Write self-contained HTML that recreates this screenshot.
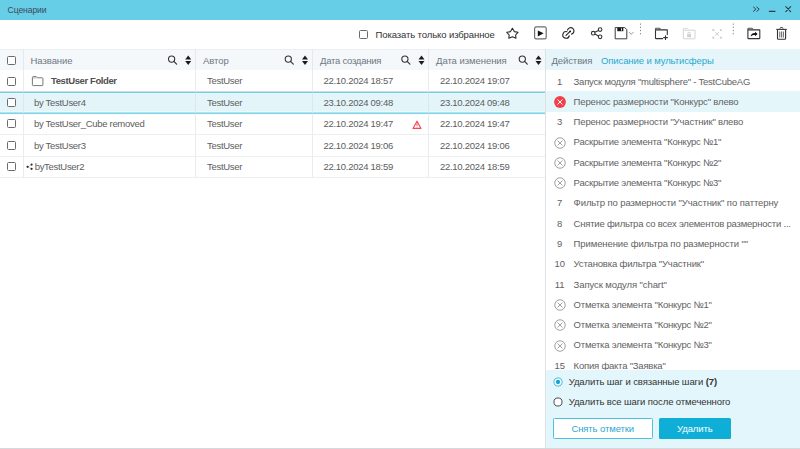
<!DOCTYPE html>
<html><head><meta charset="utf-8">
<style>
*{box-sizing:border-box;margin:0;padding:0}
html,body{width:800px;height:449px;overflow:hidden;background:#fff;font-family:"Liberation Sans",sans-serif;}
.a{position:absolute;white-space:nowrap}
#title{position:absolute;left:0;top:0;width:800px;height:19.5px;background:#67cee7;}
#title .t{left:7.6px;top:5px;font-size:8.6px;color:#3b4a58;line-height:11px;letter-spacing:-0.1px}
.tb{position:absolute;left:0;top:19.5px;width:800px;height:29px;background:#fff}
.cb{position:absolute;width:9px;height:9px;border:1.3px solid #6b6b6b;border-radius:1.5px;background:#fff}
.txt{font-size:9.5px;color:#5d5d5d;line-height:12px;letter-spacing:-0.1px}
.hdr{position:absolute;left:0;top:48.5px;width:546px;height:21.5px;background:#f5f8fb;border-top:1px solid #eceff2}
.vl{position:absolute;width:1px;background:rgba(215,220,226,0.55)}
.hl{position:absolute;height:1px;background:#eceef0}
.htxt{font-size:9.5px;color:#6d7781;line-height:12px;letter-spacing:-0.05px}
.row{position:absolute;left:0;width:546px;height:21.5px}
.sel{background:#e4f5fa}
.ptxt{font-size:9.5px;color:#626262;line-height:12px;letter-spacing:-0.1px}
</style></head><body>
<div id="title">
  <div class="a t">Сценарии</div>
</div>
<div class="tb"></div>
<div class="cb" style="left:359px;top:29.8px"></div>
<div class="a txt" style="left:375.5px;top:29px;color:#333">Показать только избранное</div>

<div class="hdr"></div>
<div class="cb" style="left:7px;top:55.5px"></div>
<div class="a htxt" style="left:30.5px;top:55px">Название</div>
<div class="a htxt" style="left:203px;top:55px">Автор</div>
<div class="a htxt" style="left:320px;top:55px;letter-spacing:-0.25px">Дата создания</div>
<div class="a htxt" style="left:436px;top:55px">Дата изменения</div>


<div class="row sel" style="top:91px;height:23px"></div>
<div class="a" style="left:0;top:91px;width:546px;height:1px;background:#c9e0e8"></div>
<div class="a" style="left:0;top:92px;width:546px;height:1px;background:#6ccfe6"></div>
<div class="a" style="left:0;top:93px;width:546px;height:1px;background:#f0f9fc"></div>
<div class="a" style="left:0;top:111px;width:546px;height:1px;background:#eef9fc"></div>
<div class="a" style="left:0;top:112px;width:546px;height:1px;background:#b0e3f0"></div>
<div class="a" style="left:0;top:113px;width:546px;height:1px;background:#7dd6ea"></div>
<div class="a" style="left:0;top:114px;width:546px;height:1px;background:#f5fbfd"></div>
<div class="vl" style="left:23px;top:49px;height:129px"></div>
<div class="vl" style="left:195px;top:49px;height:129px"></div>
<div class="vl" style="left:312px;top:49px;height:129px"></div>
<div class="vl" style="left:428px;top:49px;height:129px"></div>
<div class="hl" style="left:0;top:134px;width:546px"></div>
<div class="hl" style="left:0;top:156px;width:546px"></div>
<div class="hl" style="left:0;top:177px;width:546px"></div>

<div class="cb" style="left:7px;top:76.5px"></div>
<div class="cb" style="left:7px;top:97.5px"></div>
<div class="cb" style="left:7px;top:119px"></div>
<div class="cb" style="left:7px;top:140.5px"></div>
<div class="cb" style="left:7px;top:162px"></div>

<div class="a txt" style="left:51px;top:75px;font-weight:bold;color:#505050;letter-spacing:-0.4px">TestUser Folder</div>
<div class="a txt" style="left:34px;top:96.5px;letter-spacing:-0.3px">by TestUser4</div>
<div class="a txt" style="left:34px;top:118px;letter-spacing:-0.3px">by TestUser_Cube removed</div>
<div class="a txt" style="left:34px;top:139.5px;letter-spacing:-0.3px">by TestUser3</div>
<div class="a txt" style="left:34.7px;top:161px;letter-spacing:-0.3px">byTestUser2</div>

<div class="a txt" style="left:207px;top:75px;letter-spacing:-0.3px">TestUser</div>
<div class="a txt" style="left:207px;top:96.5px;letter-spacing:-0.3px">TestUser</div>
<div class="a txt" style="left:207px;top:118px;letter-spacing:-0.3px">TestUser</div>
<div class="a txt" style="left:207px;top:139.5px;letter-spacing:-0.3px">TestUser</div>
<div class="a txt" style="left:207px;top:161px;letter-spacing:-0.3px">TestUser</div>

<div class="a txt" style="left:323.5px;top:75px;letter-spacing:-0.28px">22.10.2024 18:57</div>
<div class="a txt" style="left:323.5px;top:96.5px;letter-spacing:-0.28px">23.10.2024 09:48</div>
<div class="a txt" style="left:323.5px;top:118px;letter-spacing:-0.28px">22.10.2024 19:47</div>
<div class="a txt" style="left:323.5px;top:139.5px;letter-spacing:-0.28px">22.10.2024 19:06</div>
<div class="a txt" style="left:323.5px;top:161px;letter-spacing:-0.28px">22.10.2024 18:59</div>

<div class="a txt" style="left:440px;top:75px;letter-spacing:-0.28px">22.10.2024 19:07</div>
<div class="a txt" style="left:440px;top:96.5px;letter-spacing:-0.28px">23.10.2024 09:48</div>
<div class="a txt" style="left:440px;top:118px;letter-spacing:-0.28px">22.10.2024 19:47</div>
<div class="a txt" style="left:440px;top:139.5px;letter-spacing:-0.28px">22.10.2024 19:06</div>
<div class="a txt" style="left:440px;top:161px;letter-spacing:-0.28px">22.10.2024 18:59</div>

<!-- right panel -->
<div class="a" style="left:545px;top:48.5px;width:255px;height:400.5px;background:#fff;border-left:1px solid #dfe2e5"></div>
<div class="a" style="left:546px;top:49px;width:254px;height:21px;background:#e6f5fa"></div>
<div class="a ptxt" style="left:551.5px;top:55px;color:#6d7780">Действия</div>
<div class="a ptxt" style="left:601px;top:55px;color:#26a9cf">Описание и мультисферы</div>

<div class="a" style="left:546px;top:91px;width:254px;height:21px;background:#e5f6fb"></div>

<div class="a ptxt" style="left:549.7px;width:20px;text-align:center;top:75.5px">1</div>
<div class="a ptxt" style="left:573.6px;top:75.5px;letter-spacing:-0.22px">Запуск модуля &quot;multisphere&quot; - TestCubeAG</div>
<svg class="a" style="left:553.7px;top:96.0px" width="12" height="12" viewBox="0 0 12 12"><circle cx="6" cy="6" r="5.9" fill="#f53f48"/><path d="M3.7 3.7L8.3 8.3M8.3 3.7L3.7 8.3" stroke="#fff" stroke-width="1" stroke-linecap="round"/></svg>
<div class="a ptxt" style="left:573.6px;top:95.8px;letter-spacing:-0.157px">Перенос размерности &quot;Конкурс&quot; влево</div>
<div class="a ptxt" style="left:549.7px;width:20px;text-align:center;top:116.1px">3</div>
<div class="a ptxt" style="left:573.6px;top:116.1px;letter-spacing:-0.164px">Перенос размерности &quot;Участник&quot; влево</div>
<svg class="a" style="left:553.7px;top:136.6px" width="12" height="12" viewBox="0 0 12 12"><circle cx="6" cy="6" r="5.25" fill="none" stroke="#909090" stroke-width="0.85"/><path d="M3.8 3.8L8.2 8.2M8.2 3.8L3.8 8.2" stroke="#909090" stroke-width="0.85" stroke-linecap="round"/></svg>
<div class="a ptxt" style="left:573.6px;top:136.4px;letter-spacing:-0.219px">Раскрытие элемента &quot;Конкурс №1&quot;</div>
<svg class="a" style="left:553.7px;top:156.9px" width="12" height="12" viewBox="0 0 12 12"><circle cx="6" cy="6" r="5.25" fill="none" stroke="#909090" stroke-width="0.85"/><path d="M3.8 3.8L8.2 8.2M8.2 3.8L3.8 8.2" stroke="#909090" stroke-width="0.85" stroke-linecap="round"/></svg>
<div class="a ptxt" style="left:573.6px;top:156.7px;letter-spacing:-0.219px">Раскрытие элемента &quot;Конкурс №2&quot;</div>
<svg class="a" style="left:553.7px;top:177.2px" width="12" height="12" viewBox="0 0 12 12"><circle cx="6" cy="6" r="5.25" fill="none" stroke="#909090" stroke-width="0.85"/><path d="M3.8 3.8L8.2 8.2M8.2 3.8L3.8 8.2" stroke="#909090" stroke-width="0.85" stroke-linecap="round"/></svg>
<div class="a ptxt" style="left:573.6px;top:177.0px;letter-spacing:-0.219px">Раскрытие элемента &quot;Конкурс №3&quot;</div>
<div class="a ptxt" style="left:549.7px;width:20px;text-align:center;top:197.3px">7</div>
<div class="a ptxt" style="left:573.6px;top:197.3px">Фильтр по размерности &quot;Участник&quot; по паттерну</div>
<div class="a ptxt" style="left:549.7px;width:20px;text-align:center;top:217.6px">8</div>
<div class="a ptxt" style="left:573.6px;top:217.6px;letter-spacing:-0.212px">Снятие фильтра со всех элементов размерности ...</div>
<div class="a ptxt" style="left:549.7px;width:20px;text-align:center;top:237.9px">9</div>
<div class="a ptxt" style="left:573.6px;top:237.9px">Применение фильтра по размерности &quot;&quot;</div>
<div class="a ptxt" style="left:549.7px;width:20px;text-align:center;top:258.2px">10</div>
<div class="a ptxt" style="left:573.6px;top:258.2px;letter-spacing:-0.157px">Установка фильтра &quot;Участник&quot;</div>
<div class="a ptxt" style="left:549.7px;width:20px;text-align:center;top:278.5px">11</div>
<div class="a ptxt" style="left:573.6px;top:278.5px">Запуск модуля &quot;chart&quot;</div>
<svg class="a" style="left:553.7px;top:299.0px" width="12" height="12" viewBox="0 0 12 12"><circle cx="6" cy="6" r="5.25" fill="none" stroke="#909090" stroke-width="0.85"/><path d="M3.8 3.8L8.2 8.2M8.2 3.8L3.8 8.2" stroke="#909090" stroke-width="0.85" stroke-linecap="round"/></svg>
<div class="a ptxt" style="left:573.6px;top:298.8px;letter-spacing:-0.217px">Отметка элемента &quot;Конкурс №1&quot;</div>
<svg class="a" style="left:553.7px;top:319.3px" width="12" height="12" viewBox="0 0 12 12"><circle cx="6" cy="6" r="5.25" fill="none" stroke="#909090" stroke-width="0.85"/><path d="M3.8 3.8L8.2 8.2M8.2 3.8L3.8 8.2" stroke="#909090" stroke-width="0.85" stroke-linecap="round"/></svg>
<div class="a ptxt" style="left:573.6px;top:319.1px;letter-spacing:-0.217px">Отметка элемента &quot;Конкурс №2&quot;</div>
<svg class="a" style="left:553.7px;top:339.6px" width="12" height="12" viewBox="0 0 12 12"><circle cx="6" cy="6" r="5.25" fill="none" stroke="#909090" stroke-width="0.85"/><path d="M3.8 3.8L8.2 8.2M8.2 3.8L3.8 8.2" stroke="#909090" stroke-width="0.85" stroke-linecap="round"/></svg>
<div class="a ptxt" style="left:573.6px;top:339.4px;letter-spacing:-0.217px">Отметка элемента &quot;Конкурс №3&quot;</div>
<div class="a ptxt" style="left:549.7px;width:20px;text-align:center;top:359.7px">15</div>
<div class="a ptxt" style="left:573.6px;top:359.7px;letter-spacing:-0.210px">Копия факта &quot;Заявка&quot;</div>
<div class="a" style="left:546px;top:369.5px;width:254px;height:78.5px;background:#e3f6fb"></div>
<div class="a" style="left:0;top:447.5px;width:800px;height:1.5px;background:#d6d9db"></div>
<div class="a" style="left:553px;top:418px;width:99.5px;height:20.5px;background:#fff;border:1px solid #4cc0de;border-radius:1.5px"></div>
<div class="a" style="left:658.6px;top:418px;width:72.8px;height:20.5px;background:#0eaed7;border-radius:1.5px"></div>

<svg class="a" style="left:552.5px;top:376.7px" width="10" height="10" viewBox="0 0 10 10"><circle cx="5" cy="5" r="4.05" fill="#fff" stroke="#3fbce0" stroke-width="1"/><circle cx="5" cy="5" r="2.15" fill="#12a6d6"/></svg>
<div class="a ptxt" style="left:568.7px;top:375.8px;color:#333">Удалить шаг и связанные шаги <b>(7)</b></div>
<svg class="a" style="left:552.5px;top:396.9px" width="10" height="10" viewBox="0 0 10 10"><circle cx="5" cy="5" r="4.05" fill="#fff" stroke="#4a4a4a" stroke-width="1"/></svg>
<div class="a ptxt" style="left:568.7px;top:396.2px;color:#333">Удалить все шаги после отмеченного</div>
<div class="a ptxt" style="left:553px;width:99.5px;text-align:center;top:422.5px;color:#2aa8d0">Снять отметки</div>
<div class="a ptxt" style="left:658.3px;width:73px;text-align:center;top:422.5px;color:#fff">Удалить</div>
<svg class="a" style="left:0;top:0" width="800" height="449" viewBox="0 0 800 449">
<g fill="none" stroke="#2e3e48" stroke-width="1.1" stroke-linecap="round" stroke-linejoin="round">
<path d="M753.5 7.1L755.9 9.2L753.5 11.3M756.8 7.1L759.2 9.2L756.8 11.3" stroke-width="1"/>
<path d="M769.4 11.3H775" stroke-width="1.3"/>
<path d="M785.8 6.6L790.7 11.6M790.7 6.6L785.8 11.6" stroke-width="1.1"/>
</g>
<polygon points="512.4,28.3 514.3,31.6 518,32.3 515.6,35 516,38.3 512.4,36.7 508.8,38.3 509.2,35 506.8,32.3 510.5,31.6" fill="none" stroke="#2a2a2a" stroke-width="1.1" stroke-linejoin="round"/>
<rect x="534.6" y="26.9" width="11.6" height="12" rx="1.6" fill="none" stroke="#6e6e6e" stroke-width="1.2"/>
<path d="M537.8 30.4L543.6 33.3L537.8 36.4Z" fill="#111"/>
<g fill="none" stroke="#2a2a2a" stroke-width="1.15" stroke-linecap="round">
<path d="M566.95 31.7A3.3 3.3 0 1 0 569.3 35.75"/>
<path d="M567.5 30.05A3.3 3.3 0 1 1 571.55 34.1"/>
<path d="M566 35.4L570.2 31.3"/>
</g><circle cx="570.1" cy="31.4" r="0.9" fill="#111"/>
<g fill="none" stroke="#333" stroke-width="1.1">
<circle cx="593.2" cy="33.2" r="1.8"/><circle cx="600.1" cy="29.6" r="1.8"/><circle cx="600.1" cy="36.8" r="1.8"/>
<path d="M594.8 32.3L598.5 30.4M594.8 34.1L598.5 36"/>
</g>
<path d="M615.2 27.6H624.8L626.8 29.6V38.8H615.2Z" fill="none" stroke="#3a3a3a" stroke-width="1" stroke-linejoin="round"/>
<rect x="617.3" y="27.8" width="6" height="3.4" fill="#1a1a1a"/>
<path d="M621.5 28.3V30.6" stroke="#fff" stroke-width="0.9"/>
<path d="M629 32.1L631.2 34.3L633.4 32.1" fill="none" stroke="#888" stroke-width="0.9"/>
<path d="M640.5 23.5V35.5M733.3 23.5V35.5" stroke="#8a8a8a" stroke-width="1" stroke-dasharray="1.3 1.9"/>
<g fill="none" stroke="#333" stroke-width="1.1" stroke-linejoin="round" stroke-linecap="round">
<path d="M662.6 38.6H656.2Q655.5 38.6 655.5 37.9V29.9H667.3V34.6"/>
<path d="M655.5 29.9V28.9Q655.5 28.2 656.2 28.2H659.4L660.6 29.4" stroke="#555"/>
<path d="M665.5 35.7V39.5M663.6 37.6H667.4" stroke-width="1.1"/>
</g>
<g fill="none" stroke="#d2d2d2" stroke-width="1" stroke-linejoin="round">
<path d="M683.3 30.2H695V38.2Q695 38.8 694.4 38.8H683.9Q683.3 38.8 683.3 38.2Z"/>
<path d="M683.3 30.2V28.9Q683.3 28.3 683.9 28.3H687.2L688.4 29.5" stroke="#dadada"/>
<path d="M687.9 34.3V33.4A1.15 1.15 0 0 1 690.2 33.4V34.3"/>
</g>
<rect x="687.1" y="34.2" width="4" height="3" fill="#d0d0d0"/>
<path d="M715.3 32.1L718.9 35.7M718.9 32.1L715.3 35.7" stroke="#d0d0d0" stroke-width="1"/>
<g fill="#cfcfcf"><rect x="712.3" y="29.1" width="2" height="2"/><rect x="719.9" y="29.1" width="2" height="2"/><rect x="712.3" y="36.7" width="2" height="2"/><rect x="719.9" y="36.7" width="2" height="2"/></g>
<g fill="none" stroke="#333" stroke-width="1.1" stroke-linejoin="round">
<path d="M747.9 29.9H759.8V37.9Q759.8 38.6 759.1 38.6H748.6Q747.9 38.6 747.9 37.9Z"/><path d="M747.9 29.9V28.9Q747.9 28.2 748.6 28.2H751.8L753 29.4" stroke="#555"/>
</g>
<path d="M750.6 36.6C751 34.2 752.6 33.1 755 33.1V31.8L757.6 34L755 36.2V34.9C753.2 34.9 751.7 35.3 750.6 36.6Z" fill="#111"/>
<g fill="none" stroke="#333" stroke-width="1.1" stroke-linejoin="round">
<path d="M776.3 29.4H786.8"/>
<path d="M777.5 30V38.4Q777.5 39.3 778.4 39.3H784.7Q785.6 39.3 785.6 38.4V30"/>
<path d="M780 28.6Q780 27.4 781.5 27.4Q783 27.4 783 28.6" stroke-width="1"/>
<path d="M779.8 31.5V37.5M781.6 31.5V37.5M783.4 31.5V37.5" stroke-width="0.9" stroke="#555"/>
</g>
<circle cx="171.6" cy="59.1" r="3.1" fill="none" stroke="#333" stroke-width="1.1"/><path d="M173.9 61.4L176.6 64.1" stroke="#333" stroke-width="1.2" stroke-linecap="round"/><path d="M185.2 59.6L188.2 55.6L191.2 59.6Z M185.2 61.1L188.2 65.1L191.2 61.1Z" fill="#1a1a1a"/>
<circle cx="288.3" cy="59.1" r="3.1" fill="none" stroke="#333" stroke-width="1.1"/><path d="M290.6 61.4L293.3 64.1" stroke="#333" stroke-width="1.2" stroke-linecap="round"/><path d="M302.0 59.6L305.0 55.6L308.0 59.6Z M302.0 61.1L305.0 65.1L308.0 61.1Z" fill="#1a1a1a"/>
<circle cx="404.9" cy="59.1" r="3.1" fill="none" stroke="#333" stroke-width="1.1"/><path d="M407.2 61.4L409.9 64.1" stroke="#333" stroke-width="1.2" stroke-linecap="round"/><path d="M418.5 59.6L421.5 55.6L424.5 59.6Z M418.5 61.1L421.5 65.1L424.5 61.1Z" fill="#1a1a1a"/>
<circle cx="522.3" cy="59.1" r="3.1" fill="none" stroke="#333" stroke-width="1.1"/><path d="M524.6 61.4L527.3 64.1" stroke="#333" stroke-width="1.2" stroke-linecap="round"/><path d="M535.5 59.6L538.5 55.6L541.5 59.6Z M535.5 61.1L538.5 65.1L541.5 61.1Z" fill="#1a1a1a"/>
<path d="M32.4 77.4Q32.4 76.6 33.2 76.6H36.3L37.5 77.8H42.1Q42.9 77.8 42.9 78.6V84.9Q42.9 85.6 42.1 85.6H33.2Q32.4 85.6 32.4 84.9Z" fill="none" stroke="#707070" stroke-width="0.95" stroke-linejoin="round"/>
<path d="M32.9 77.9H37" stroke="#b5b5b5" stroke-width="1"/>
<path d="M417 121.2L421 128.4H413Z" fill="none" stroke="#f34552" stroke-width="1.1" stroke-linejoin="round"/>
<path d="M417 123.4V125.9M417 126.8V127.4" stroke="#f34552" stroke-width="1"/>
<path d="M27.8 166.8L31.6 164.6M27.8 166.8L31.6 168.8" stroke="#aaa" stroke-width="0.5"/>
<g fill="#2a2a2a"><circle cx="27.6" cy="166.8" r="1.1"/><circle cx="31.6" cy="164.6" r="1.1"/><circle cx="31.6" cy="168.8" r="1.1"/></g>
</svg>
</body></html>
